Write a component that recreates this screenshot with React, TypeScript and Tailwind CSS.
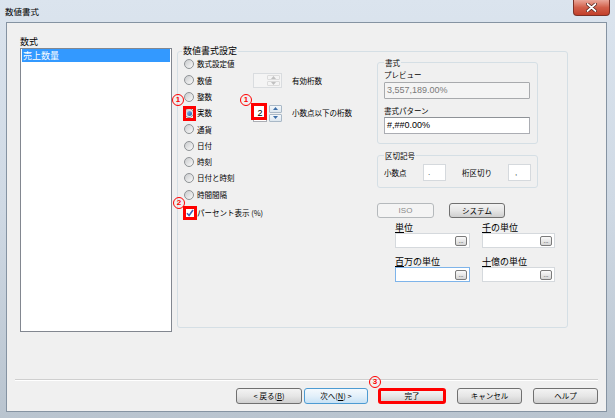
import React from "react";

const jp = "font-['Noto_Sans_CJK_JP','Liberation_Sans',sans-serif]";

function Radio({ checked }: { checked?: boolean }) {
  return (
    <span className="w-[10px] h-[10px] shrink-0 rounded-full border border-[#8f9396] bg-gradient-to-br from-[#c9cbcd] to-[#fbfbfb] flex items-center justify-center">
      {checked && (
        <span className="w-[5px] h-[5px] rounded-full bg-gradient-to-br from-[#8cc3ef] to-[#1b58a3]" />
      )}
    </span>
  );
}

function Tri({ up, color }: { up?: boolean; color: string }) {
  return (
    <svg width="5" height="3" viewBox="0 0 5 3">
      <path d={up ? "M0 3 L2.5 0 L5 3Z" : "M0 0 L5 0 L2.5 3Z"} fill={color} />
    </svg>
  );
}

function SpinArrows({ disabled }: { disabled?: boolean }) {
  const c = disabled ? "#c0c0c0" : "#3d6ea8";
  const btn = disabled
    ? "border-[#dcdcdc] bg-[#f4f4f4]"
    : "border-[#a9b8c6] bg-gradient-to-b from-[#f4f8fb] to-[#dde7ef]";
  return (
    <div className="w-[13px] h-full flex flex-col gap-[1px]">
      <div className={`flex-1 rounded-[1px] border ${btn} flex items-center justify-center`}>
        <Tri up color={c} />
      </div>
      <div className={`flex-1 rounded-[1px] border ${btn} flex items-center justify-center`}>
        <Tri color={c} />
      </div>
    </div>
  );
}

function Button({
  children,
  w,
  kind,
}: {
  children: React.ReactNode;
  w: string;
  kind?: "default" | "disabled" | "red";
}) {
  let cls =
    "border border-[#707070] bg-gradient-to-b from-[#f3f3f3] via-[#e6e6e6] to-[#cfcfcf] text-black";
  if (kind === "default")
    cls =
      "border border-[#4d9bd2] bg-gradient-to-b from-[#f4f9fd] via-[#e3f0fa] to-[#c8e2f5] text-black";
  if (kind === "disabled")
    cls = "border border-[#b5b9bc] bg-[#f4f4f4] text-[#8a8a8a]";
  if (kind === "red")
    cls =
      "border-[3px] border-[#ff0000] bg-gradient-to-b from-[#f3f3f3] via-[#e6e6e6] to-[#d3d3d3] text-black";
  return (
    <div
      className={`${w} h-full rounded-[3px] ${cls} flex items-center justify-center text-[7.5px] leading-none ${jp}`}
    >
      {children}
    </div>
  );
}

function GroupLegend({ children, size }: { children: React.ReactNode; size: string }) {
  return (
    <legend className={`px-[1px] ${size} ${jp} text-black`}>{children}</legend>
  );
}

function UnitField({
  first,
  rest,
  focus,
}: {
  first: string;
  rest: string;
  focus?: boolean;
}) {
  return (
    <div className="flex flex-col">
      <span className={`h-[11px] text-[9px] leading-[11px] ${jp}`}>
        <span className="underline underline-offset-1">{first}</span>
        {rest}
      </span>
      <div
        className={`h-[15px] bg-white border ${
          focus ? "border-[#7eb4ea]" : "border-[#d5d9dd]"
        } flex items-center justify-end pr-[2px]`}
      >
        <div className="w-[12px] h-[10px] rounded-[2px] border border-[#7b7b7b] bg-gradient-to-b from-[#fafafa] to-[#d6d6d6] flex items-end justify-center text-[6px] leading-[7px] font-['Liberation_Sans',sans-serif]">
          ...
        </div>
      </div>
    </div>
  );
}

function Circled({ children, cls }: { children: React.ReactNode; cls: string }) {
  return (
    <span
      className={`absolute ${cls} w-[12px] h-[12px] rounded-full border-[1.5px] border-[#ff0000] flex items-center justify-center text-[8px] font-bold leading-none text-[#ff0000] font-['Liberation_Sans',sans-serif]`}
    >
      {children}
    </span>
  );
}

const radios = [
  "数式設定値",
  "数値",
  "整数",
  "実数",
  "通貨",
  "日付",
  "時刻",
  "日付と時刻",
  "時間間隔",
];

export default function App() {
  return (
    <div className="relative w-[615px] h-[418px] overflow-hidden flex flex-col bg-gradient-to-b from-[#dbe4ee] via-[#cfd9e4] to-[#b9c4cf] font-['Liberation_Sans','Noto_Sans_CJK_JP',sans-serif] text-black">
      {/* title bar */}
      <div className="h-[22px] shrink-0 flex justify-between">
        <span className={`pl-[5px] pt-[6px] text-[8.5px] leading-[11px] ${jp}`}>数値書式</span>
        <div className="mr-[5px] w-[37px] h-[16px] rounded-b-[4px] border border-[#7c3127] border-t-0 bg-gradient-to-b from-[#e9a699] via-[#d15f4a] to-[#c23f2a] flex items-center justify-center">
          <svg width="11" height="9" viewBox="0 0 11 9">
            <path
              d="M1.5 1 L9.5 8 M9.5 1 L1.5 8"
              stroke="#4a1a14"
              strokeWidth="3.2"
              strokeLinecap="round"
            />
            <path
              d="M1.5 1 L9.5 8 M9.5 1 L1.5 8"
              stroke="#ffffff"
              strokeWidth="1.8"
              strokeLinecap="round"
            />
          </svg>
        </div>
      </div>

      {/* content */}
      <div className="ml-[6px] mr-[8px] mb-[6px] flex-1 border border-[#8593a2] bg-[#f0f0f0] flex flex-col">
        <div className="flex items-start pt-[13px] pl-[13px]">
          {/* left column */}
          <div className="w-[152px] flex flex-col">
            <span className={`h-[12px] text-[9px] leading-[12px] ${jp}`}>数式</span>
            <div className="h-[284px] border border-[#828790] bg-white px-[1px]">
              <div
                className={`h-[13px] bg-[#3399ff] text-white text-[9px] leading-[13px] pl-[1px] ${jp}`}
              >
                売上数量
              </div>
            </div>
          </div>

          {/* main group */}
          <fieldset className="ml-[5px] mt-[10px] w-[391px] h-[282px] border border-[#d5dfe5] rounded-[3px] pl-[4px]">
            <GroupLegend size="text-[9px] leading-[10px]">数値書式設定</GroupLegend>
            <div className="flex">
              {/* left part */}
              <div className="ml-[2px] w-[193px] flex flex-col">
                {radios.map((r, i) => (
                  <div key={r} className="h-[16.3px] flex items-center">
                    <div className="w-[69px] flex items-center gap-[3px]">
                      <Radio checked={i === 3} />
                      <span className={`text-[7.5px] leading-none ${jp}`}>{r}</span>
                    </div>
                    {i === 1 && (
                      <>
                        <div className="w-[29px] h-[15px] border border-[#d9dcdf] bg-[#f4f4f4] flex justify-end p-[1px]">
                          <SpinArrows disabled />
                        </div>
                        <span className={`ml-[10px] text-[7.5px] leading-none ${jp}`}>有効桁数</span>
                      </>
                    )}
                    {i === 3 && (
                      <>
                        <div className="w-[29px] h-[17px] flex gap-[2px]">
                          <div className="w-[14px] h-full border border-[#abadb3] bg-white flex items-center justify-center text-[9px] leading-none">
                            2
                          </div>
                          <SpinArrows />
                        </div>
                        <span className={`ml-[10px] text-[7.5px] leading-none ${jp}`}>
                          小数点以下の桁数
                        </span>
                      </>
                    )}
                  </div>
                ))}
                <div className="mt-[2px] h-[16px] flex items-center gap-[2px]">
                  <span className="w-[11px] h-[11px] border border-[#8f9396] bg-white flex items-center justify-center">
                    <svg width="8" height="8" viewBox="0 0 8 8">
                      <path
                        d="M1 4.2 L3.1 6.5 L7 1"
                        stroke="#3f63b8"
                        strokeWidth="1.6"
                        fill="none"
                      />
                    </svg>
                  </span>
                  <span className={`text-[7.5px] leading-none ${jp}`}>パーセント表示 (%)</span>
                </div>
              </div>

              {/* right part */}
              <div className="w-[190px] flex flex-col">
                <fieldset className="mt-[1.5px] w-[161px] border border-[#d5dfe5] rounded-[3px] pl-[6px] pr-[7px] pb-[9px]">
                  <GroupLegend size="text-[7.5px] leading-[9px]">書式</GroupLegend>
                  <div className={`pt-[3.5px] h-[13.5px] text-[7.5px] leading-[10px] ${jp}`}>プレビュー</div>
                  <div className="mt-[2px] h-[17px] border border-[#a8aaad] rounded-[1px] bg-[#f4f4f4] flex items-center pl-[2px] text-[9px] text-[#7a7a7a] leading-none">
                    3,557,189.00%
                  </div>
                  <div className={`mt-[7px] h-[10px] text-[7.5px] leading-[10px] ${jp}`}>書式パターン</div>
                  <div className="mt-[1px] h-[17px] border border-[#abadb3] border-t-[#8e9297] bg-white flex items-center pl-[2px] text-[9px] leading-none">
                    #,##0.00%
                  </div>
                </fieldset>

                <fieldset className="mt-[6.5px] w-[161px] border border-[#d5dfe5] rounded-[3px] pl-[6px] pb-[6px]">
                  <GroupLegend size="text-[7.5px] leading-[9px]">区切記号</GroupLegend>
                  <div className="pt-[4.5px] flex items-center">
                    <span className={`w-[39px] text-[7.5px] leading-none ${jp}`}>小数点</span>
                    <div className="w-[23px] h-[17px] border border-[#d5d9dd] bg-white flex items-center pl-[4px] text-[8px] leading-none text-[#333]">
                      .
                    </div>
                    <span className={`ml-[16px] w-[46px] text-[7.5px] leading-none ${jp}`}>桁区切り</span>
                    <div className="w-[23px] h-[17px] border border-[#d5d9dd] bg-white flex items-center pl-[6px] text-[8px] leading-none text-[#333]">
                      ,
                    </div>
                  </div>
                </fieldset>

                <div className="mt-[15px] h-[15px] flex gap-[15px]">
                  <Button w="w-[57px]" kind="disabled">
                    <span className="font-['Liberation_Sans',sans-serif] text-[8px]">ISO</span>
                  </Button>
                  <Button w="w-[56px]">システム</Button>
                </div>

                <div className="mt-[4px] pl-[18px] grid grid-cols-[75px_73px] gap-x-[12px] gap-y-[8px]">
                  <UnitField first="単" rest="位" />
                  <UnitField first="千" rest="の単位" />
                  <UnitField first="百" rest="万の単位" focus />
                  <UnitField first="十" rest="億の単位" />
                </div>
              </div>
            </div>
          </fieldset>
        </div>

        <div className="flex-1" />
        <div className="mx-[8px] h-[2px] border-t border-[#cfcfcf] border-b border-b-white" />
        <div className="mt-[7px] mb-[7px] h-[16px] flex justify-end pr-[8px]">
          <Button w="w-[66px]">
            &lt; 戻る(<span className="underline">B</span>)
          </Button>
          <div className="ml-[2px] h-full">
            <Button w="w-[64px]" kind="default">
              次へ(<span className="underline">N</span>) &gt;
            </Button>
          </div>
          <div className="ml-[10px] h-full">
            <Button w="w-[68px]" kind="red">
              完了
            </Button>
          </div>
          <div className="ml-[11px] h-full">
            <Button w="w-[65px]">キャンセル</Button>
          </div>
          <div className="ml-[11px] h-full">
            <Button w="w-[65px]">ヘルプ</Button>
          </div>
        </div>
      </div>

      {/* annotations */}
      <div className="absolute left-[183px] top-[106px] w-[13px] h-[15px] border-[3px] border-[#ff0000]" />
      <div className="absolute left-[251px] top-[103px] w-[16px] h-[17px] border-[3px] border-[#ff0000]" />
      <div className="absolute left-[183px] top-[206px] w-[14px] h-[14px] border-[3px] border-[#ff0000]" />
      <Circled cls="left-[172px] top-[94px]">1</Circled>
      <Circled cls="left-[240px] top-[94px]">1</Circled>
      <Circled cls="left-[173px] top-[197px]">2</Circled>
      <Circled cls="left-[369px] top-[376px]">3</Circled>
    </div>
  );
}
